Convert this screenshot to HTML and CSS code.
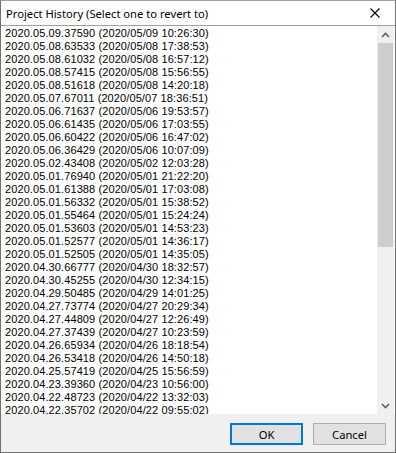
FILE: index.html
```html
<!DOCTYPE html>
<html lang="en">
<head>
    <meta charset="UTF-8">
    <title>Project History</title>
    <link rel="stylesheet" href="styles.css">
</head>
<body>

<div class="dialog">
    <div class="title-bar">
        <span class="title">Project History (Select one to revert to)</span>
        <span class="close-btn">
            <svg width="10" height="10" viewBox="0 0 10 10"><path d="M0.5 0.5 L9.5 9.5 M9.5 0.5 L0.5 9.5" stroke="#000" stroke-width="1.1"/></svg>
        </span>
    </div>

    <div class="list-box">
        <ul class="history-list">
            <li>2020.05.09.37590 (2020/05/09 10:26:30)</li>
            <li>2020.05.08.63533 (2020/05/08 17:38:53)</li>
            <li>2020.05.08.61032 (2020/05/08 16:57:12)</li>
            <li>2020.05.08.57415 (2020/05/08 15:56:55)</li>
            <li>2020.05.08.51618 (2020/05/08 14:20:18)</li>
            <li>2020.05.07.67011 (2020/05/07 18:36:51)</li>
            <li>2020.05.06.71637 (2020/05/06 19:53:57)</li>
            <li>2020.05.06.61435 (2020/05/06 17:03:55)</li>
            <li>2020.05.06.60422 (2020/05/06 16:47:02)</li>
            <li>2020.05.06.36429 (2020/05/06 10:07:09)</li>
            <li>2020.05.02.43408 (2020/05/02 12:03:28)</li>
            <li>2020.05.01.76940 (2020/05/01 21:22:20)</li>
            <li>2020.05.01.61388 (2020/05/01 17:03:08)</li>
            <li>2020.05.01.56332 (2020/05/01 15:38:52)</li>
            <li>2020.05.01.55464 (2020/05/01 15:24:24)</li>
            <li>2020.05.01.53603 (2020/05/01 14:53:23)</li>
            <li>2020.05.01.52577 (2020/05/01 14:36:17)</li>
            <li>2020.05.01.52505 (2020/05/01 14:35:05)</li>
            <li>2020.04.30.66777 (2020/04/30 18:32:57)</li>
            <li>2020.04.30.45255 (2020/04/30 12:34:15)</li>
            <li>2020.04.29.50485 (2020/04/29 14:01:25)</li>
            <li>2020.04.27.73774 (2020/04/27 20:29:34)</li>
            <li>2020.04.27.44809 (2020/04/27 12:26:49)</li>
            <li>2020.04.27.37439 (2020/04/27 10:23:59)</li>
            <li>2020.04.26.65934 (2020/04/26 18:18:54)</li>
            <li>2020.04.26.53418 (2020/04/26 14:50:18)</li>
            <li>2020.04.25.57419 (2020/04/25 15:56:59)</li>
            <li>2020.04.23.39360 (2020/04/23 10:56:00)</li>
            <li>2020.04.22.48723 (2020/04/22 13:32:03)</li>
            <li>2020.04.22.35702 (2020/04/22 09:55:02)</li>
        </ul>
        <div class="scrollbar">
            <div class="arrow">
                <svg width="9" height="6" viewBox="0 0 9 6"><path d="M1 5 L4.5 1.5 L8 5" fill="none" stroke="#606060" stroke-width="1.6"/></svg>
            </div>
            <div class="track">
                <div class="thumb"></div>
            </div>
            <div class="arrow">
                <svg width="9" height="6" viewBox="0 0 9 6"><path d="M1 1 L4.5 4.5 L8 1" fill="none" stroke="#606060" stroke-width="1.6"/></svg>
            </div>
        </div>
    </div>

    <div class="button-row">
        <button class="btn btn-default">OK</button>
        <button class="btn">Cancel</button>
    </div>
</div>

</body>
</html>
```

FILE: styles.css
```css
/* Dialog window */
body {
    margin: 0;
    padding: 0;
    background: #ffffff;
}

.dialog {
    width: 396px;
    height: 453px;
    box-sizing: border-box;
    border: 1px solid #707070;
    border-top-color: #a0a0a0;
    display: flex;
    flex-direction: column;
    background: #f0f0f0;
}

.title-bar {
    height: 24px;
    background: #ffffff;
    display: flex;
    align-items: center;
    justify-content: space-between;
    padding-left: 5px;
}

.title {
    font-family: 'Noto Sans', sans-serif;
    font-size: 11.2px;
    color: #000;
}

.close-btn {
    width: 36px;
    height: 24px;
    display: flex;
    align-items: center;
    justify-content: center;
    margin-right: 2px;
}

/* List */
.list-box {
    height: 388px;
    border-top: 1px solid #a0a0a0;
    background: #ffffff;
    display: flex;
    overflow: hidden;
}

.history-list {
    flex: 1;
    list-style: none;
    margin: 0;
    padding: 1px 0 0 4px;
    font-family: 'Liberation Sans', Arial, sans-serif;
    font-size: 11px;
    letter-spacing: 0.1px;
    color: #000;
    overflow: hidden;
}

.history-list li {
    height: 13px;
    line-height: 13px;
    white-space: nowrap;
}

.scrollbar {
    width: 17px;
    margin-right: 1px;
    background: #f0f0f0;
    display: flex;
    flex-direction: column;
}

.arrow {
    height: 17px;
    display: flex;
    align-items: center;
    justify-content: center;
}

.track {
    flex: 1;
    padding: 0 1px;
}

.thumb {
    height: 204px;
    background: #cdcdcd;
}

/* Buttons */
.button-row {
    flex: 1;
    display: flex;
    justify-content: flex-end;
    align-items: flex-start;
    gap: 10px;
    padding: 9px 9px 0 0;
}

.btn {
    width: 73px;
    height: 22px;
    box-sizing: border-box;
    font-family: 'Noto Sans', sans-serif;
    font-size: 11.2px;
    color: #000;
    background: #e1e1e1;
    border: 1px solid #adadad;
    padding: 0;
}

.btn-default {
    border: 2px solid #0078d7;
}
```
